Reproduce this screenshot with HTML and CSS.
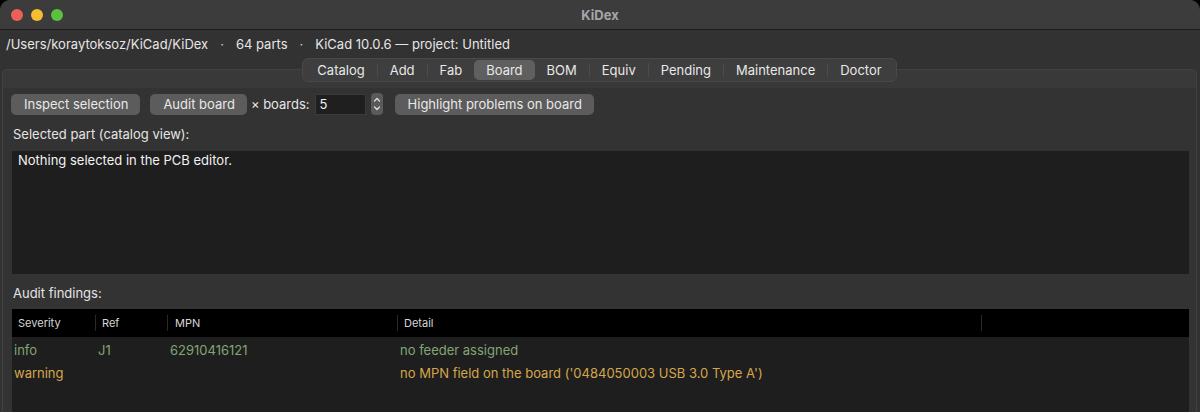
FILE: index.html
```html
<!DOCTYPE html>
<html>
<head>
<meta charset="utf-8">
<title>KiDex</title>
<link rel="stylesheet" href="styles.css">
</head>
<body>
<div class="window">
  <div class="titlebar">
    <div class="lights">
      <span class="light red"></span>
      <span class="light yellow"></span>
      <span class="light green"></span>
    </div>
    <div class="title">KiDex</div>
  </div>
  <div class="infobar">
    <span>/Users/koraytoksoz/KiCad/KiDex</span>
    <span class="dot">·</span>
    <span>64 parts</span>
    <span class="dot">·</span>
    <span>KiCad 10.0.6 — project: Untitled</span>
  </div>
  <div class="tabwidget">
    <div class="tabbar">
      <span class="tab">Catalog</span><span class="sep"></span>
      <span class="tab">Add</span><span class="sep"></span>
      <span class="tab">Fab</span>
      <span class="tab active">Board</span>
      <span class="tab">BOM</span><span class="sep"></span>
      <span class="tab">Equiv</span><span class="sep"></span>
      <span class="tab">Pending</span><span class="sep"></span>
      <span class="tab">Maintenance</span><span class="sep"></span>
      <span class="tab">Doctor</span>
    </div>
    <div class="pane">
      <div class="toolbar">
        <button class="btn">Inspect selection</button>
        <button class="btn">Audit board</button>
        <span class="lbl">× boards:</span>
        <div class="spin">
          <div class="spin-input">5</div>
          <div class="spin-arrows">
            <svg width="12" height="22" viewBox="0 0 12 22"><path d="M3.5 8 L6 5.5 L8.5 8" fill="none" stroke="#e0e0e0" stroke-width="1.3" stroke-linecap="round" stroke-linejoin="round"/><path d="M3.5 14 L6 16.5 L8.5 14" fill="none" stroke="#e0e0e0" stroke-width="1.3" stroke-linecap="round" stroke-linejoin="round"/></svg>
          </div>
        </div>
        <button class="btn">Highlight problems on board</button>
      </div>
      <div class="label first">Selected part (catalog view):</div>
      <div class="textbox">Nothing selected in the PCB editor.</div>
      <div class="label second">Audit findings:</div>
      <div class="table">
        <div class="thead">
          <div class="th c1">Severity</div>
          <div class="th c2">Ref</div>
          <div class="th c3">MPN</div>
          <div class="th c4">Detail</div>
          <div class="th c5"></div>
        </div>
        <div class="row info">
          <div class="td c1">info</div>
          <div class="td c2">J1</div>
          <div class="td c3">62910416121</div>
          <div class="td c4">no feeder assigned</div>
          <div class="td c5"></div>
        </div>
        <div class="row warn">
          <div class="td c1">warning</div>
          <div class="td c2"></div>
          <div class="td c3"></div>
          <div class="td c4">no MPN field on the board ('0484050003 USB 3.0 Type A')</div>
          <div class="td c5"></div>
        </div>
      </div>
    </div>
  </div>
</div>
</body>
</html>
```

FILE: styles.css
```css
* { box-sizing: border-box; }
html, body {
  margin: 0;
  padding: 0;
  background: #000;
  width: 1200px;
  height: 412px;
  overflow: hidden;
}
body {
  font-family: Inter, "Liberation Sans", sans-serif;
  font-size: 13px;
  color: #e4e4e4;
}
.window {
  width: 1200px;
  height: 412px;
  background: #323232;
  border-radius: 10px 10px 0 0;
  overflow: hidden;
  display: flex;
  flex-direction: column;
}
.titlebar {
  height: 30px;
  background: #3c3c3c;
  border-bottom: 1px solid #1c1c1c;
  display: flex;
  align-items: center;
  position: relative;
  flex: none;
}
.lights {
  display: flex;
  gap: 8px;
  padding-left: 11px;
}
.light {
  width: 12px;
  height: 12px;
  border-radius: 50%;
  display: block;
}
.red { background: #ee5f58; }
.yellow { background: #f5bd31; }
.green { background: #5ac23f; }
.title {
  position: absolute;
  left: 0;
  right: 0;
  text-align: center;
  font-weight: 700;
  color: #a6a6a6;
  font-size: 13px;
}
.infobar {
  height: 28px;
  display: flex;
  align-items: center;
  gap: 12px;
  padding-left: 6px;
  padding-bottom: 1px;
  color: #e6e6e6;
  flex: none;
}
.infobar .dot { color: #cfcfcf; }
.tabwidget {
  flex: 1;
  display: flex;
  flex-direction: column;
  align-items: center;
  padding: 0 3px 0 2px;
}
.tabbar {
  position: relative;
  z-index: 2;
  height: 24px;
  margin-top: 0;
  margin-bottom: -13px;
  background: #3e3e3e;
  border: 1px solid #484848;
  border-radius: 6px;
  display: flex;
  align-items: center;
  padding: 0 2px;
}
.tab {
  padding: 0 12px;
  height: 20px;
  line-height: 20px;
  color: #e8e8e8;
  border-radius: 5px;
}
.tab.active {
  background: #5f5f5f;
  padding: 0 12px 0 12px;
}
.sep {
  width: 1px;
  height: 14px;
  background: #4c4c4c;
}
.pane {
  align-self: stretch;
  flex: 1;
  border: 1px solid #424242;
  border-bottom: none;
  border-radius: 5px 5px 0 0;
  background: linear-gradient(#393939 0, #393939 18px, #333 18px);
  padding: 23px 7px 0 8px;
  display: flex;
  flex-direction: column;
}
.toolbar {
  display: flex;
  align-items: center;
  height: 22px;
  gap: 10px;
}
.btn {
  font: inherit;
  color: #e8e8e8;
  background: #5c5c5c;
  border: none;
  border-radius: 5px;
  height: 21px;
  padding: 0 12px 0 13px;
  line-height: 21px;
}
.toolbar .lbl {
  margin-left: -6px;
  margin-right: -5px;
  color: #e6e6e6;
}
.spin {
  display: flex;
  align-items: center;
  gap: 5px;
  margin-left: 0;
  margin-right: 2px;
}
.spin-input {
  width: 51px;
  height: 21px;
  background: #1f1f1f;
  border: 1px solid #3a3a3a;
  padding-left: 4px;
  line-height: 19px;
  color: #eee;
}
.spin-arrows {
  width: 12px;
  height: 22px;
  background: #5a5a5a;
  border-radius: 4px;
  display: flex;
}
.label {
  color: #e4e4e4;
  padding-left: 2px;
}
.label.first { margin-top: 10px; line-height: 18px; }
.label.second { margin-top: 10px; line-height: 18px; }
.textbox {
  margin-top: 8px;
  margin-left: 1px;
  height: 123px;
  background: #1e1e1e;
  padding: 1px 6px;
  line-height: 16px;
  color: #f2f2f2;
}
.table {
  margin-top: 7px;
  margin-left: 1px;
  flex: 1;
  background: #1e1e1e;
}
.thead {
  display: flex;
  height: 28px;
  background: #000;
  align-items: center;
  font-size: 11px;
  color: #d6d6d6;
}
.th {
  padding-left: 6px;
  height: 16px;
  line-height: 16px;
  border-left: 1px solid #2a2a2a;
}
.th.c1 { border-left: none; }
.c1 { width: 83px; }
.c2 { width: 72px; }
.c3 { width: 230px; }
.c4 { width: 584px; }
.c5 { flex: 1; }
.th.c3 { padding-left: 7px; }
.row {
  display: flex;
  height: 23px;
  align-items: center;
}
.thead + .row { margin-top: 1px; }
.td {
  padding-left: 2px;
  white-space: nowrap;
}
.td.c2, .td.c3, .td.c4 { padding-left: 3px; }
.info { color: #82a673; }
.warn { color: #d6a64b; }
```
